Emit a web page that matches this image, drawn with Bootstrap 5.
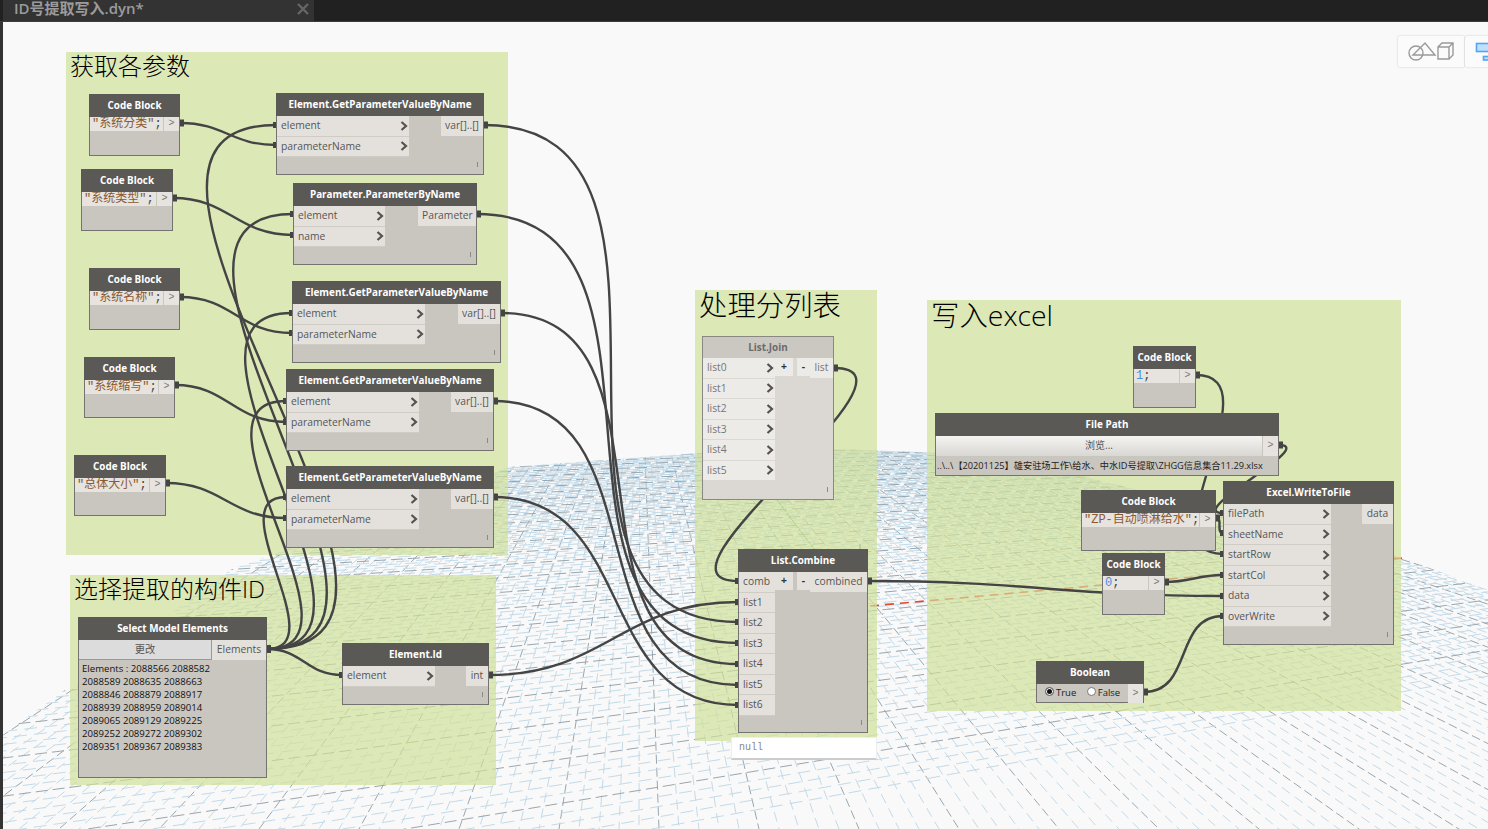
<!DOCTYPE html>
<html lang="en">
<head>
    <meta charset="UTF-8">
    <meta name="viewport" content="width=device-width, initial-scale=1.0">
    <title>ID号提取写入.dyn*</title>
    <link rel="stylesheet" href="https://cdn.jsdelivr.net/npm/bootstrap@5.3.3/dist/css/bootstrap.min.css">
    <style>
        html, body { height: 100%; overflow: hidden; background: #333; }
        body { font-family: "Open Sans", "Noto Sans CJK SC", sans-serif; }
        .app-shell { width: 1488px; height: 829px; }
        .tab-bar { height: 22px; background: #212121; border-bottom: 1px solid #3c3c3c; }
        .doc-tab { width: 311px; margin-left: 3px; background: #333; color: #9b9b9b; font-size: 15px; font-weight: 600; line-height: 17px; padding-left: 11px; padding-right: 4px; }
        .side-strip { width: 3px; background: #333; }
        .workspace { background: #f9f9f9; overflow: hidden; }
        .grid-layer, .wire-layer { position: absolute; left: 0; top: 0; width: 1485px; height: 807px; }
        .view-tools { position: absolute; top: 14px; right: 0; height: 31px; gap: 1px; }
        .view-box { height: 31px; background: #fbfbfb; box-shadow: 0 0 2px #c4c4c4; border-radius: 2px 0 0 2px; }
        .group-area { position: absolute; background: rgba(208, 224, 152, .68); color: #000; padding-left: 4px; font-weight: 300; font-family: "Open Sans", "Noto Sans CJK SC", sans-serif; }
        .group-sm { font-size: 24px; line-height: 27px; }
        .group-lg { font-size: 28.4px; line-height: 30px; }
        .graph-node { position: absolute; display: flex; flex-direction: column; background: #c9c5bf; border: 1px solid #757370; color: #565656; font-size: 10.3px; }
        .node-head { flex: 0 0 22px; background: #5b5956; color: #fff; font-weight: 700; font-size: 9.9px; line-height: 23px; text-align: center; white-space: nowrap; margin: -1px -1px 0; }
        .port-row { height: 20.5px; background: #e4e1dc; border-bottom: 1px solid #cfccc6; line-height: 19px; padding: 0 1px 0 4px; white-space: nowrap; }
        .port-out { height: 20px; background: #e4e1dc; line-height: 19px; padding: 0 4px; white-space: nowrap; text-align: center; }
        .port-mini { height: 18px; width: 18px; background: #e4e1dc; line-height: 16px; font-weight: 700; color: #333; text-align: center; }
        .port-mini-sm { width: 13px; }
        .lace-mark { position: absolute; right: 5px; bottom: 7px; width: 1px; height: 5px; background: #8b8985; }
        .code-row { height: 14px; }
        .code-text { background: #e7e3de; color: #8a5a33; font: 12px/15px "Liberation Mono", "Noto Sans CJK SC", monospace; padding-left: 2px; white-space: nowrap; overflow: hidden; }
        .code-num { color: #4a90e2; }
        .code-end { color: #444; }
        .out-arrow { flex: 0 0 15px; margin-left: 1px; background: #e7e3de; color: #777; font: 10px/14px "Liberation Mono", monospace; text-align: center; }
        .out-arrow-tall { line-height: 19px; }
        .node-dim { background: #dbd8d3; border-color: #8a8883; }
        .node-dim .node-head { background: #cbc7c1; color: #6b6b6b; border: 1px solid #8a8883; border-bottom: 0; line-height: 21px; }
        .node-dim .port-row { background: #ecebe7; border-color: #dcd9d4; color: #777; }
        .node-dim .port-out, .node-dim .port-mini { background: #ecebe7; color: #777; }
        .node-dim .port-mini { color: #333; }
        .pick-btn { background: #dcdcdc; height: 20px; line-height: 19px; border-right: 1px solid #9a9894; border-bottom: 1px solid #9a9894; color: #555; text-align: center; }
        .elements-out { width: 54px; }
        .id-list { color: #111; font-size: 9.6px; line-height: 13px; padding: 2px 3px; white-space: nowrap; }
        .browse-btn { height: 20px; background: linear-gradient(#f4f4f2, #d9d7d3); color: #555; text-align: center; line-height: 19px; font-size: 10px; }
        .path-text { color: #222; font-size: 9.2px; line-height: 20px; white-space: nowrap; padding-left: 1px; overflow: hidden; }
        .radio-text { font-size: 9.5px; color: #222; }
        .radio-dot { display: inline-block; width: 9px; height: 9px; border-radius: 50%; background: #fff; border: 1px solid #777; margin-right: 2px; }
        .radio-on { background: #111; box-shadow: inset 0 0 0 1px #fff; }
        .value-tip { position: absolute; left: 728px; top: 715px; width: 146px; height: 23px; background: #fff; border: 1px solid #eee; border-bottom: 2px solid #ccc; color: #888; font: 10px/19px "Liberation Mono", monospace; padding-left: 7px; }
    </style>
</head>
<body class="m-0">
    <div class="app-shell d-flex flex-column">
        <div class="tab-bar d-flex flex-shrink-0">
            <div class="doc-tab d-flex justify-content-between">
                <span>ID号提取写入.dyn*</span>
                <svg width="14" height="20" viewBox="0 0 14 20"><path d="M2 4 L12 14 M12 4 L2 14" stroke="#666" stroke-width="2.4"/></svg>
            </div>
        </div>
        <div class="d-flex flex-grow-1">
            <div class="side-strip"></div>
            <div id="workspace" class="workspace position-relative flex-grow-1">
                <svg id="gridLayer" class="grid-layer" viewBox="3 22 1485 807"></svg>
                <div id="groups"></div>
                <svg id="wireLayer" class="wire-layer" viewBox="3 22 1485 807"></svg>
                <div id="nodes"></div>
                <div class="value-tip">null</div>
                <div class="view-tools d-flex">
                    <div class="view-box">
                        <svg width="66" height="31" viewBox="0 0 66 31" fill="none" stroke="#9a9a9a" stroke-width="1.4">
                            <circle cx="18" cy="17" r="7"/>
                            <path d="M15 19 L27 7 L37 19 Z"/>
                            <path d="M40 11 H51 V23 H40 Z M40 11 L44 7 H55 V19 L51 23 M51 11 L55 7"/>
                        </svg>
                    </div>
                    <div class="view-box">
                        <svg width="23" height="31" viewBox="0 0 23 31">
                            <rect x="11.5" y="7.5" width="14" height="8" fill="#bfe0ff" stroke="#4fa6f5" stroke-width="1.6"/>
                            <rect x="18.5" y="20.5" width="8" height="3.5" fill="#bfe0ff" stroke="#4fa6f5" stroke-width="1.6"/>
                        </svg>
                    </div>
                </div>
            </div>
        </div>
    </div>

    <script src="https://cdn.jsdelivr.net/npm/bootstrap@5.3.3/dist/js/bootstrap.bundle.min.js"></script>
    <script>
        // all coordinates below are screenshot pixels, the workspace starts at 3,22
        var ox = 3, oy = 22;

        var groups = [
            { title: "获取各参数", x: 66, y: 52, w: 442, h: 503, cls: "group-sm" },
            { title: "选择提取的构件ID", x: 70, y: 575, w: 426, h: 210, cls: "group-sm" },
            { title: "处理分列表", x: 695, y: 290, w: 182, h: 451, cls: "group-lg" },
            { title: "写入excel", x: 927, y: 300, w: 474, h: 411, cls: "group-lg" }
        ];

        var codeBlocks = [
            { x: 89, y: 94, w: 91, h: 62, code: '"系统分类"<span class="code-end">;</span>' },
            { x: 81, y: 169, w: 92, h: 62, code: '"系统类型"<span class="code-end">;</span>' },
            { x: 89, y: 268, w: 91, h: 62, code: '"系统名称"<span class="code-end">;</span>' },
            { x: 84, y: 357, w: 91, h: 61, code: '"系统缩写"<span class="code-end">;</span>' },
            { x: 74, y: 455, w: 92, h: 61, code: '"总体大小"<span class="code-end">;</span>' },
            { x: 1133, y: 346, w: 63, h: 62, code: '<span class="code-num">1</span><span class="code-end">;</span>' },
            { x: 1081, y: 490, w: 135, h: 61, code: '"ZP-自动喷淋给水"<span class="code-end">;</span>' },
            { x: 1102, y: 553, w: 63, h: 62, code: '<span class="code-num">0</span><span class="code-end">;</span>' }
        ];

        var getParam = "Element.GetParameterValueByName";
        var nodes = [
            { title: getParam, x: 276, y: 93, w: 208, h: 82, inW: 132, inputs: ["element", "parameterName"], output: "var[]..[]", outW: 42 },
            { title: "Parameter.ParameterByName", x: 293, y: 183, w: 184, h: 82, inW: 91, inputs: ["element", "name"], output: "Parameter", outW: 58 },
            { title: getParam, x: 292, y: 281, w: 209, h: 82, inW: 132, inputs: ["element", "parameterName"], output: "var[]..[]", outW: 42 },
            { title: getParam, x: 286, y: 369, w: 208, h: 82, inW: 132, inputs: ["element", "parameterName"], output: "var[]..[]", outW: 42 },
            { title: getParam, x: 286, y: 466, w: 208, h: 82, inW: 132, inputs: ["element", "parameterName"], output: "var[]..[]", outW: 42 },
            { title: "Element.Id", x: 342, y: 643, w: 147, h: 62, inW: 92, inputs: ["element"], output: "int", outW: 22 },
            { title: "List.Join", x: 702, y: 336, w: 132, h: 164, inW: 72, inputs: ["list0", "list1", "list2", "list3", "list4", "list5"], output: "list", outW: 23, mini: true, dim: true },
            { title: "List.Combine", x: 738, y: 549, w: 130, h: 184, inW: 36, inputs: ["comb", "list1", "list2", "list3", "list4", "list5", "list6"], output: "combined", outW: 57, mini: true, noArrow: true },
            { title: "Excel.WriteToFile", x: 1223, y: 481, w: 171, h: 164, inW: 107, inputs: ["filePath", "sheetName", "startRow", "startCol", "data", "overWrite"], output: "data", outW: 31 }
        ];

        var idLines = [
            "Elements : 2088566 2088582",
            "2088589 2088635 2088663",
            "2088846 2088879 2088917",
            "2088939 2088959 2089014",
            "2089065 2089129 2089225",
            "2089252 2089272 2089302",
            "2089351 2089367 2089383"
        ];

        // [fromX, fromY, toX, toY]
        var wires = [
            [180, 123, 276, 145], [173, 198, 293, 235], [180, 297, 292, 333], [175, 385, 286, 422], [166, 483, 286, 518],
            [267, 649, 276, 125], [267, 649, 293, 214], [267, 649, 292, 313], [267, 649, 286, 401], [267, 649, 286, 497], [267, 649, 342, 675],
            [484, 125, 738, 622], [477, 214, 738, 643], [501, 313, 738, 664], [494, 401, 738, 685], [494, 497, 738, 705], [489, 675, 738, 602],
            [834, 368, 738, 581], [868, 581, 1223, 596],
            [1196, 375, 1223, 554], [1279, 445, 1223, 513], [1216, 518, 1223, 533], [1165, 582, 1223, 575], [1144, 692, 1223, 616]
        ];

        function place(item) {
            return `left:${item.x - ox}px;top:${item.y - oy}px;width:${item.w}px;height:${item.h}px`;
        }

        var chevron = '<svg width="8" height="10" viewBox="0 0 8 10" fill="none"><path d="M1.5 1 L6 5 L1.5 9" stroke="#55524f" stroke-width="2.2"/></svg>';

        function lace() {
            return '<span class="lace-mark"></span>';
        }

        function drawGroups() {
            document.getElementById("groups").innerHTML = groups.map(function(g) {
                return `<div class="group-area ${g.cls}" style="${place(g)}">${g.title}</div>`;
            }).join("");
        }

        function drawNodes() {
            var html = "";

            codeBlocks.forEach(function(c) {
                html += `
                    <div class="graph-node" style="${place(c)}">
                        <div class="node-head">Code Block</div>
                        <div class="code-row d-flex">
                            <div class="code-text flex-grow-1">${c.code}</div>
                            <div class="out-arrow">&gt;</div>
                        </div>
                    </div>`;
            });

            nodes.forEach(function(n) {
                var rows = n.inputs.map(function(name) {
                    return `<div class="port-row d-flex justify-content-between align-items-center"><span>${name}</span>${n.noArrow ? "" : chevron}</div>`;
                }).join("");
                var minis = n.mini ? '<div class="port-mini ms-auto">+</div><div class="port-mini port-mini-sm ms-1">-</div>' : "";
                html += `
                    <div class="graph-node ${n.dim ? "node-dim" : ""}" style="${place(n)}">
                        <div class="node-head">${n.title}</div>
                        <div class="d-flex">
                            <div style="width:${n.inW}px">${rows}</div>
                            <div class="flex-grow-1 d-flex align-items-start">
                                ${minis}
                                <div class="port-out ms-auto" style="width:${n.outW}px">${n.output}</div>
                            </div>
                        </div>
                        ${lace()}
                    </div>`;
            });

            // the nodes that have their own controls
            html += `
                <div class="graph-node" style="${place({ x: 78, y: 617, w: 189, h: 161 })}">
                    <div class="node-head">Select Model Elements</div>
                    <div class="d-flex">
                        <div class="pick-btn flex-grow-1">更改</div>
                        <div class="port-out elements-out">Elements</div>
                    </div>
                    <div class="id-list">${idLines.join("<br>")}</div>
                </div>
                <div class="graph-node" style="${place({ x: 935, y: 413, w: 344, h: 63 })}">
                    <div class="node-head">File Path</div>
                    <div class="d-flex">
                        <div class="browse-btn flex-grow-1">浏览...</div>
                        <div class="out-arrow out-arrow-tall">&gt;</div>
                    </div>
                    <div class="path-text">..\\..\\【20201125】雄安驻场工作\\给水、中水ID号提取\\ZHGG信息集合11.29.xlsx</div>
                </div>
                <div class="graph-node" style="${place({ x: 1036, y: 661, w: 108, h: 42 })}">
                    <div class="node-head">Boolean</div>
                    <div class="d-flex align-items-center flex-grow-1">
                        <div class="radio-text flex-grow-1 ps-2">
                            <span class="radio-dot radio-on"></span>True
                            <span class="radio-dot ms-2"></span>False
                        </div>
                        <div class="out-arrow out-arrow-tall align-self-stretch">&gt;</div>
                    </div>
                </div>`;

            document.getElementById("nodes").innerHTML = html;
        }

        function drawWires() {
            var svg = "";
            wires.forEach(function(w) {
                var d = Math.hypot(w[2] - w[0], w[3] - w[1]) * 0.45;
                svg += `<path d="M${w[0]} ${w[1]} C${w[0] + d} ${w[1]} ${w[2] - d} ${w[3]} ${w[2]} ${w[3]}" fill="none" stroke="#444" stroke-width="2.4"/>`;
                svg += `<rect x="${w[0]}" y="${w[1] - 3.5}" width="4" height="7" fill="#444"/>`;
                svg += `<rect x="${w[2] - 3}" y="${w[3] - 3}" width="3" height="6" fill="#444"/>`;
            });
            document.getElementById("wireLayer").innerHTML = svg;
        }

        // ground grid of the 3d view, two families of lines running to their vanishing points
        function drawGrid() {
            var vpA = [640, 320], vpB = [3000, 400];
            var svg = '<defs><clipPath id="ground"><polygon points="0,737 230,570 510,467 780,447 1000,455 1403,558 1488,590 1488,829 0,829"/></clipPath></defs><g clip-path="url(#ground)">';
            var k, x, y, major;

            for (k = 0; k <= 120; k++) {
                x = -141 + k * 20;
                major = k % 5 === 0;
                svg += `<line x1="${vpA[0]}" y1="${vpA[1]}" x2="${vpA[0] + (x - vpA[0]) * 1.5}" y2="${vpA[1] + 509 * 1.5}" stroke="${major ? "#9aa6ae" : "#c3dae8"}" stroke-dasharray="${major ? "9 4" : "10 6"}" stroke-dashoffset="${k * 7}"/>`;
            }
            for (k = 46; k <= 181; k++) {
                y = 321 + 23460 / k;
                major = k % 5 === 0;
                svg += `<line x1="${vpB[0]}" y1="${vpB[1]}" x2="-200" y2="${y + (y - vpB[1]) * 840 / 2360}" stroke="${major ? "#9aa6ae" : "#c3dae8"}" stroke-dasharray="${major ? "12 5" : "13 7"}" stroke-dashoffset="${k * 11}"/>`;
            }
            svg += "</g>";
            // axes
            svg += '<line x1="870" y1="606" x2="1403" y2="558" stroke="#e8452f" stroke-width="1.6" stroke-dasharray="9 6"/>';
            svg += '<line x1="777" y1="500" x2="814" y2="549" stroke="#6aa83e" stroke-dasharray="3 1"/>';
            svg += '<line x1="860" y1="544" x2="860" y2="549" stroke="#4466cc"/>';
            document.getElementById("gridLayer").innerHTML = svg;
        }

        drawGrid();
        drawGroups();
        drawWires();
        drawNodes();
    </script>
</body>
</html>
